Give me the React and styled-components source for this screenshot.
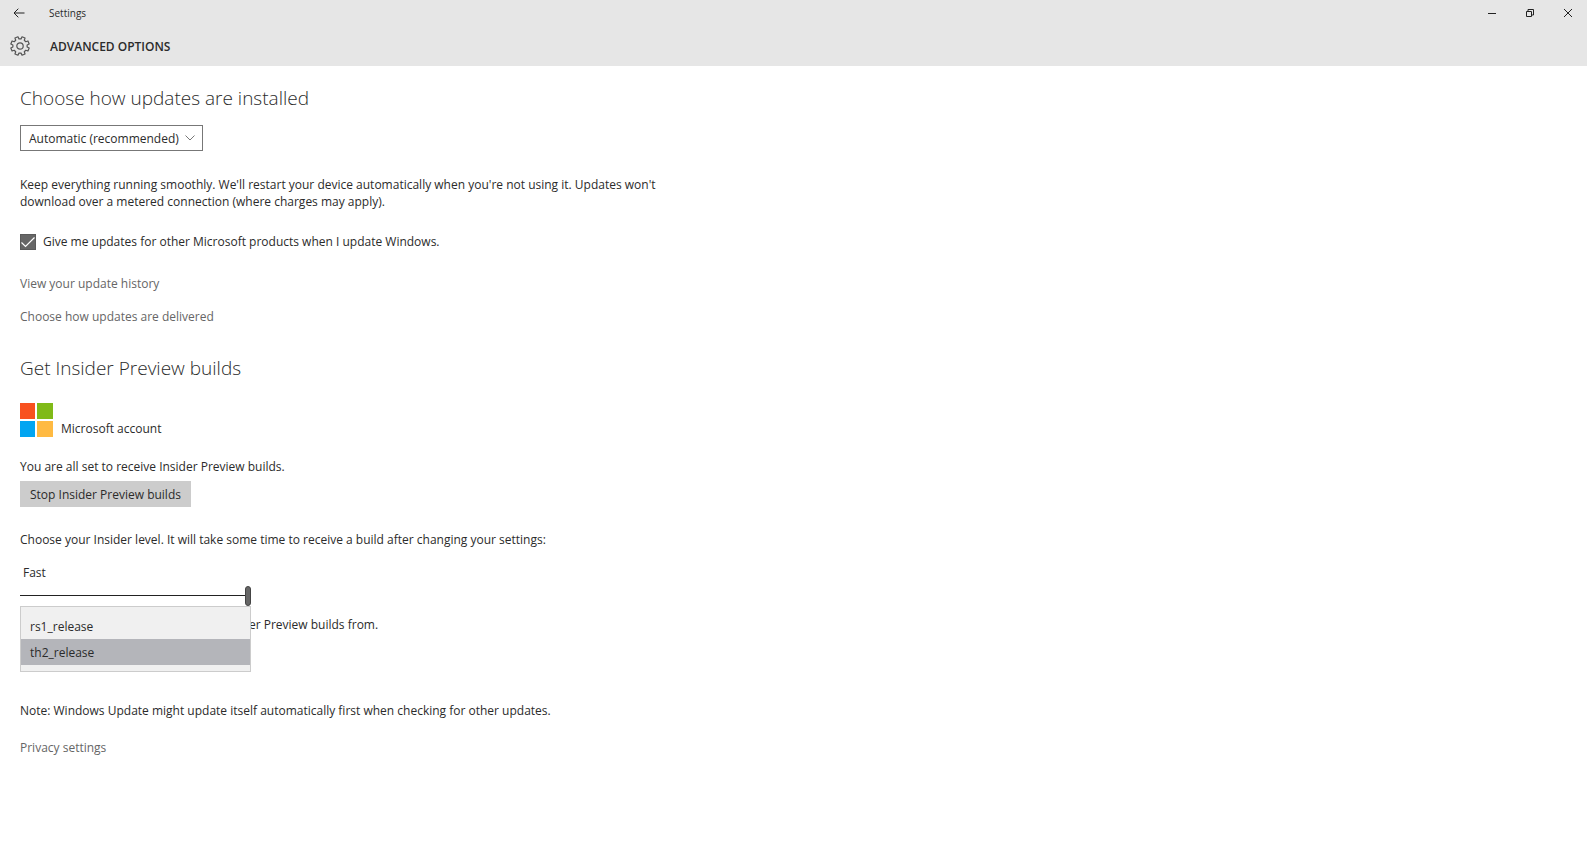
import React, { useState } from 'react'
import styled, { createGlobalStyle } from 'styled-components';

export default function App() {
  const [level, setLevel] = useState(2);
  const [otherProducts, setOtherProducts] = useState(true);
  const [branch, setBranch] = useState('th2_release');

  return (
    <>
      <GlobalStyle />
      <Header>
        <TitleBar>
          <IconButton aria-label='Back'>
            <svg width='12' height='10' viewBox='0 0 12 10'>
              <path d='M11.5 5H1M5.3 0.7L1 5l4.3 4.3' />
            </svg>
          </IconButton>
          <AppName>Settings</AppName>
          <WindowButtons>
            <IconButton aria-label='Minimize'>
              <svg width='10' height='10' viewBox='0 0 10 10'>
                <path d='M1 5.5h8' />
              </svg>
            </IconButton>
            <IconButton aria-label='Restore'>
              <svg width='10' height='10' viewBox='0 0 10 10'>
                <path d='M1.5 3.5h5v5h-5zM3 3.2V1.5h5.5V7H6.7' />
              </svg>
            </IconButton>
            <IconButton aria-label='Close'>
              <svg width='10' height='10' viewBox='0 0 10 10'>
                <path d='M1 1l8 8M9 1L1 9' />
              </svg>
            </IconButton>
          </WindowButtons>
        </TitleBar>
        <PageBar>
          <Gear />
          <PageTitle>ADVANCED OPTIONS</PageTitle>
        </PageBar>
      </Header>

      <Content>
        <Heading>Choose how updates are installed</Heading>
        <SelectBox>
          <select aria-label='Choose how updates are installed'>
            <option>Automatic (recommended)</option>
          </select>
          <svg width='10' height='6' viewBox='0 0 10 6'>
            <path d='M0.5 0.5L5 5l4.5-4.5' />
          </svg>
        </SelectBox>
        <Text $top={25}>
          Keep everything running smoothly. We'll restart your device automatically when you're not using it. Updates won't download over a metered connection (where charges may apply).
        </Text>
        <CheckLabel>
          <CheckBox>
            <input type='checkbox' checked={otherProducts} onChange={e => setOtherProducts(e.target.checked)} />
            <svg width='16' height='16' viewBox='0 0 16 16'>
              <path d='M1.5 8.5l4 4 9-9' />
            </svg>
          </CheckBox>
          Give me updates for other Microsoft products when I update Windows.
        </CheckLabel>
        <TextLink href='#history' $top={25}>View your update history</TextLink>
        <TextLink href='#delivery' $top={16}>Choose how updates are delivered</TextLink>

        <Heading $top={29}>Get Insider Preview builds</Heading>
        <Account>
          <svg width='33' height='34' viewBox='0 0 33 34'>
            <rect width='15' height='16' fill='#f8511f' />
            <rect x='17' width='16' height='16' fill='#80ba18' />
            <rect y='18' width='15' height='16' fill='#02a5f1' />
            <rect x='17' y='18' width='16' height='16' fill='#ffba42' />
          </svg>
          <span>Microsoft account</span>
        </Account>
        <Text $top={21}>You are all set to receive Insider Preview builds.</Text>
        <StopButton>Stop Insider Preview builds</StopButton>
        <Text $top={24}>Choose your Insider level. It will take some time to receive a build after changing your settings:</Text>
        <LevelLabel htmlFor='level'>Fast</LevelLabel>
        <Slider id='level' type='range' min='0' max='2' value={level} onChange={e => setLevel(Number(e.target.value))} />
        <BranchArea>
          <Text $top={11}>Choose the branch you'd like to run Insider Preview builds from.</Text>
          <Menu role='listbox' aria-label='Branch'>
            {['rs1_release', 'th2_release'].map(name => (
              <MenuItem key={name} role='option' aria-selected={name === branch} $active={name === branch} onClick={() => setBranch(name)}>
                {name}
              </MenuItem>
            ))}
          </Menu>
        </BranchArea>
        <Text $top={29}>Note: Windows Update might update itself automatically first when checking for other updates.</Text>
        <TextLink href='#privacy' $top={20}>Privacy settings</TextLink>
      </Content>
    </>
  )
}

function Gear() {
  // eight teeth, each one a bump on the outer ring
  const points = [];
  for (let i = 0; i < 8; i++) {
    [[-14, 7.2], [-10, 9.4], [10, 9.4], [14, 7.2]].forEach(([offset, r]) => {
      const a = (i * 45 + 22.5 + offset) * Math.PI / 180;
      points.push(`${(10 + r * Math.cos(a)).toFixed(2)},${(10 + r * Math.sin(a)).toFixed(2)}`);
    });
  }
  return (
    <GearIcon width='20' height='20' viewBox='0 0 20 20'>
      <polygon points={points.join(' ')} />
      <circle cx='10' cy='10' r='3.2' />
    </GearIcon>
  )
}

const GlobalStyle = createGlobalStyle`
  * {
    box-sizing: border-box;
  }
  body {
    margin: 0;
    background: #fff;
    color: #2b2b2b;
    font-family: 'Segoe UI', 'Open Sans', 'Noto Sans', sans-serif;
    font-size: 12px;
    line-height: 17px;
  }
  button, select {
    font: inherit;
    color: inherit;
  }
`

const Header = styled.header`
  height: 66px;
  background: #e6e6e6;
`

const TitleBar = styled.div`
  display: flex;
  align-items: center;
  height: 26px;
`

const IconButton = styled.button`
  display: flex;
  align-items: center;
  justify-content: center;
  width: 38px;
  height: 26px;
  padding: 0;
  border: 0;
  background: none;
  svg {
    fill: none;
    stroke: #222;
  }
`

const AppName = styled.span`
  margin-left: 11px;
  font-size: 10px;
`

const WindowButtons = styled.div`
  display: flex;
  margin-left: auto;
`

const PageBar = styled.div`
  display: flex;
  align-items: center;
  height: 40px;
  padding-left: 10px;
`

const GearIcon = styled.svg`
  fill: none;
  stroke: #555;
  stroke-width: 1.2;
  stroke-linejoin: round;
`

const PageTitle = styled.h1`
  margin: 0 0 0 20px;
  font-size: 12px;
  font-weight: 600;
`

const Content = styled.main`
  display: flex;
  flex-direction: column;
  align-items: flex-start;
  max-width: 680px;
  padding: 18px 20px;
`

const Heading = styled.h2`
  margin: ${props => props.$top || 0}px 0 0;
  font-size: 19px;
  font-weight: 300;
  line-height: 28px;
`

const SelectBox = styled.div`
  position: relative;
  margin-top: 13px;
  select {
    display: block;
    appearance: none;
    width: 183px;
    height: 26px;
    padding: 0 20px 0 8px;
    border: 1px solid #777;
    border-radius: 0;
    background: #fff;
  }
  svg {
    position: absolute;
    top: 10px;
    right: 8px;
    fill: none;
    stroke: #777;
    pointer-events: none;
  }
`

const Text = styled.p`
  margin: ${props => props.$top}px 0 0;
`

const CheckLabel = styled.label`
  display: flex;
  align-items: center;
  gap: 7px;
  margin-top: 23px;
`

const CheckBox = styled.span`
  position: relative;
  display: flex;
  input {
    appearance: none;
    width: 16px;
    height: 16px;
    margin: 0;
    border: 1px solid #5a5a5a;
  }
  input:checked {
    background: #666;
  }
  svg {
    position: absolute;
    inset: 0;
    fill: none;
    stroke: #fff;
    stroke-width: 1.2;
    pointer-events: none;
  }
  input:not(:checked) + svg {
    display: none;
  }
`

const TextLink = styled.a`
  margin-top: ${props => props.$top}px;
  color: #666;
  text-decoration: none;
`

const Account = styled.div`
  display: flex;
  align-items: flex-end;
  gap: 8px;
  margin-top: 21px;
`

const StopButton = styled.button`
  height: 26px;
  margin-top: 6px;
  padding: 0 10px;
  border: 0;
  background: #ccc;
`

const LevelLabel = styled.label`
  margin: 16px 0 0 3px;
`

const Slider = styled.input`
  appearance: none;
  width: 231px;
  height: 20px;
  margin: 4px 0 0;
  background: none;
  &::-webkit-slider-runnable-track {
    height: 1px;
    background: #222;
  }
  &::-webkit-slider-thumb {
    appearance: none;
    width: 6px;
    height: 20px;
    margin-top: -9px;
    border: 1px solid #444;
    border-radius: 3px;
    background: #666;
  }
`

const BranchArea = styled.div`
  position: relative;
  height: 68px;
`

const Menu = styled.div`
  position: absolute;
  top: 1px;
  left: 0;
  width: 231px;
  padding: 6px 0;
  border: 1px solid #ccc;
  background: #f0f0f0;
`

const MenuItem = styled.button`
  display: block;
  width: 100%;
  height: 26px;
  padding: 0 9px;
  border: 0;
  background: ${props => props.$active ? '#b4b5ba' : 'none'};
  text-align: left;
`
